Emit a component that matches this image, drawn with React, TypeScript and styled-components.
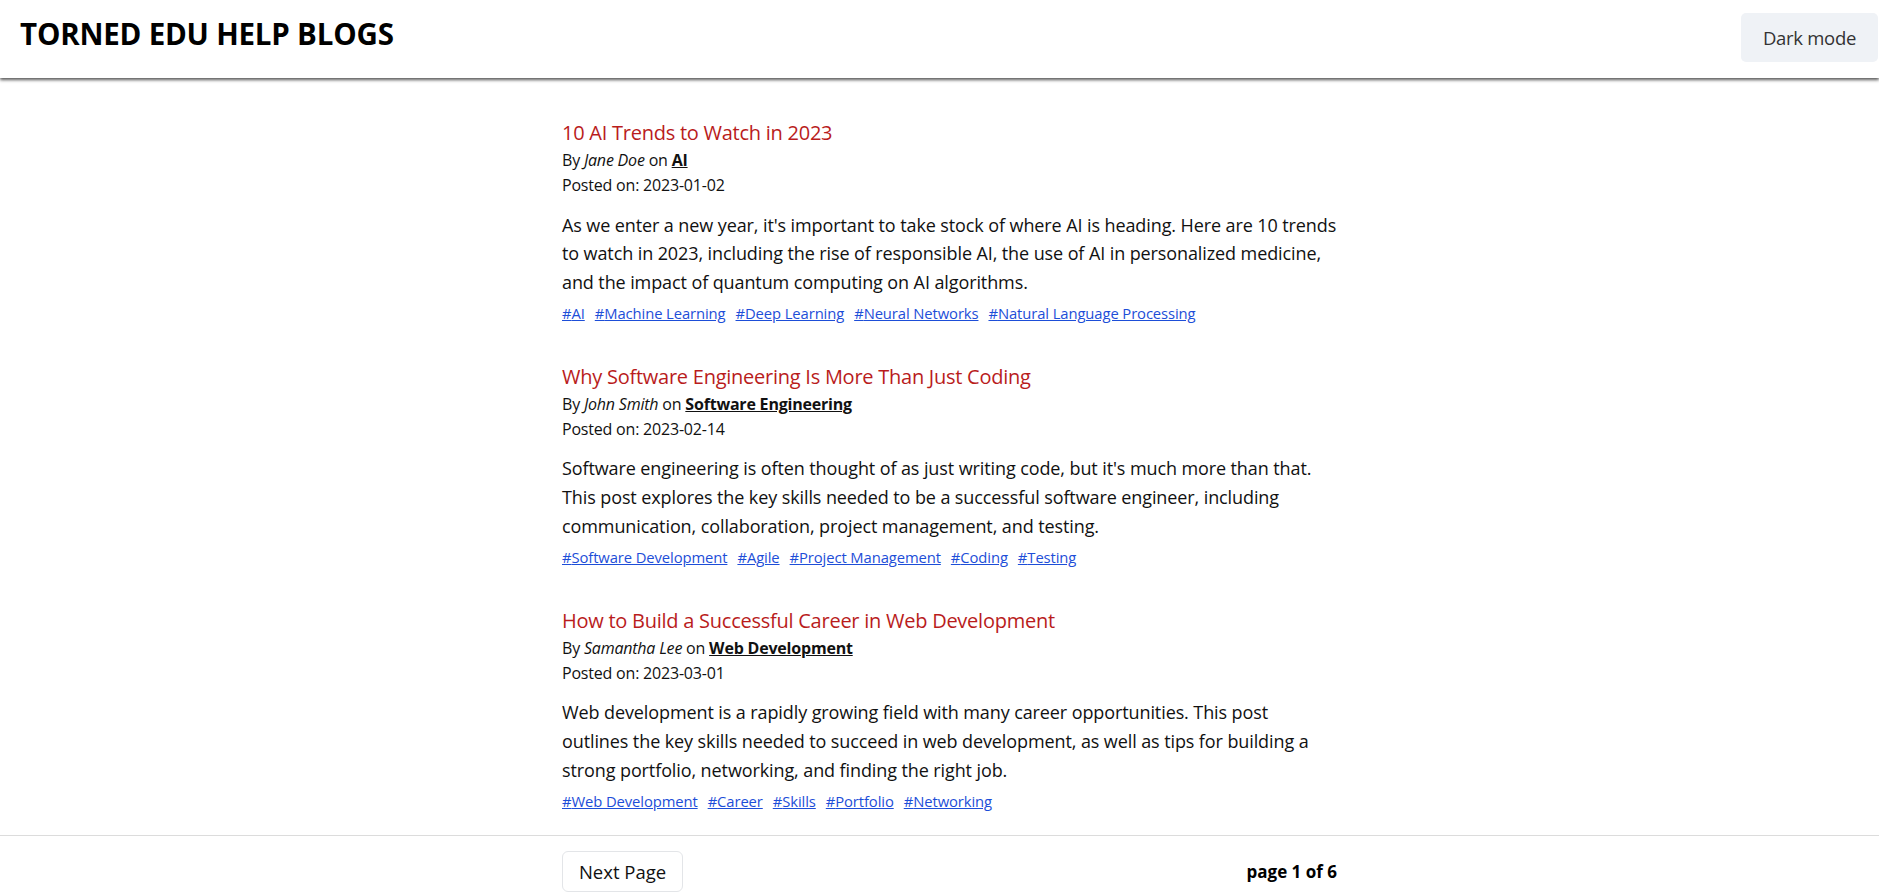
import React from "react";
import styled, { createGlobalStyle } from "styled-components";

const GlobalStyle = createGlobalStyle`
  html, body {
    margin: 0;
    padding: 0;
    background: #ffffff;
    font-family: "Open Sans", "Noto Sans", "Liberation Sans", sans-serif;
    color: #111111;
  }
  * { box-sizing: border-box; }
`;

const Header = styled.header`
  height: 78px;
  display: flex;
  justify-content: space-between;
  align-items: flex-start;
  padding: 0 1px 0 20px;
  background: #ffffff;
  box-shadow: 0 2px 3px rgba(60, 60, 60, 0.85);
  position: relative;
  z-index: 1;
`;

const SiteTitle = styled.h1`
  margin: 14px 0 0;
  font-size: 29.5px;
  font-weight: 700;
  letter-spacing: -0.2px;
  line-height: 40px;
  color: #000000;
`;

const ModeButton = styled.button`
  margin-top: 13px;
  width: 137px;
  height: 49px;
  border: none;
  border-radius: 5px;
  background: #eff2f6;
  color: #333333;
  font-family: inherit;
  font-size: 18.5px;
  letter-spacing: -0.3px;
  cursor: pointer;
`;

const Main = styled.main`
  padding: 40px 0 24px 20px;
`;

const Column = styled.div`
  width: 775px;
  margin: 0 auto;
  display: flex;
  flex-direction: column;
  gap: 39px;
`;

const Post = styled.article`
  display: flex;
  flex-direction: column;
`;

const PostTitle = styled.h2`
  margin: 0;
  font-size: 20px;
  font-weight: 400;
  line-height: 30px;
  letter-spacing: -0.25px;
  color: #b91c1c;
`;

const Meta = styled.p`
  margin: 0;
  font-size: 16px;
  line-height: 25px;
  letter-spacing: -0.2px;
`;

const Author = styled.em`
  font-style: italic;
`;

const CategoryLink = styled.a`
  color: #111111;
  font-weight: 700;
  text-decoration: underline;
`;

const Body = styled.p`
  margin: 12.5px 0 0;
  font-size: 18px;
  line-height: 28.8px;
  letter-spacing: -0.1px;
  white-space: nowrap;
`;

const BodyLine = styled.span`
  display: block;
`;

const Tags = styled.div`
  margin-top: 6px;
  display: flex;
  flex-wrap: wrap;
  gap: 10px;
  line-height: 20px;
`;

const Tag = styled.a`
  font-size: 14.8px;
  font-weight: 500;
  letter-spacing: -0.1px;
  color: #1d4ed8;
  text-decoration: underline;
`;

const Footer = styled.footer`
  border-top: 1px solid #dcdcdc;
  padding: 15px 0 20px 20px;
`;

const FooterRow = styled.div`
  width: 775px;
  margin: 0 auto;
  display: flex;
  justify-content: space-between;
  align-items: center;
`;

const PageButton = styled.button`
  width: 121px;
  height: 41px;
  border: 1px solid #e3e5e8;
  border-radius: 6px;
  background: #ffffff;
  color: #111111;
  font-family: inherit;
  font-size: 18.5px;
  cursor: pointer;
`;

const PageInfo = styled.span`
  font-size: 17px;
  font-weight: 700;
  color: #000000;
`;

type PostData = {
  title: string;
  author: string;
  category: string;
  date: string;
  body: string[];
  tags: string[];
};

const posts: PostData[] = [
  {
    title: "10 AI Trends to Watch in 2023",
    author: "Jane Doe",
    category: "AI",
    date: "2023-01-02",
    body: [
      "As we enter a new year, it's important to take stock of where AI is heading. Here are 10 trends",
      "to watch in 2023, including the rise of responsible AI, the use of AI in personalized medicine,",
      "and the impact of quantum computing on AI algorithms.",
    ],
    tags: ["AI", "Machine Learning", "Deep Learning", "Neural Networks", "Natural Language Processing"],
  },
  {
    title: "Why Software Engineering Is More Than Just Coding",
    author: "John Smith",
    category: "Software Engineering",
    date: "2023-02-14",
    body: [
      "Software engineering is often thought of as just writing code, but it's much more than that.",
      "This post explores the key skills needed to be a successful software engineer, including",
      "communication, collaboration, project management, and testing.",
    ],
    tags: ["Software Development", "Agile", "Project Management", "Coding", "Testing"],
  },
  {
    title: "How to Build a Successful Career in Web Development",
    author: "Samantha Lee",
    category: "Web Development",
    date: "2023-03-01",
    body: [
      "Web development is a rapidly growing field with many career opportunities. This post",
      "outlines the key skills needed to succeed in web development, as well as tips for building a",
      "strong portfolio, networking, and finding the right job.",
    ],
    tags: ["Web Development", "Career", "Skills", "Portfolio", "Networking"],
  },
];

export default function App() {
  return (
    <>
      <GlobalStyle />
      <Header>
        <SiteTitle>TORNED EDU HELP BLOGS</SiteTitle>
        <ModeButton>Dark mode</ModeButton>
      </Header>
      <Main>
        <Column>
          {posts.map((p) => (
            <Post key={p.title}>
              <PostTitle>{p.title}</PostTitle>
              <Meta>
                By <Author>{p.author}</Author> on <CategoryLink href="#">{p.category}</CategoryLink>
              </Meta>
              <Meta>Posted on: {p.date}</Meta>
              <Body>
                {p.body.map((line) => (
                  <BodyLine key={line}>{line}</BodyLine>
                ))}
              </Body>
              <Tags>
                {p.tags.map((t) => (
                  <Tag key={t} href="#">#{t}</Tag>
                ))}
              </Tags>
            </Post>
          ))}
        </Column>
      </Main>
      <Footer>
        <FooterRow>
          <PageButton>Next Page</PageButton>
          <PageInfo>page 1 of 6</PageInfo>
        </FooterRow>
      </Footer>
    </>
  );
}
